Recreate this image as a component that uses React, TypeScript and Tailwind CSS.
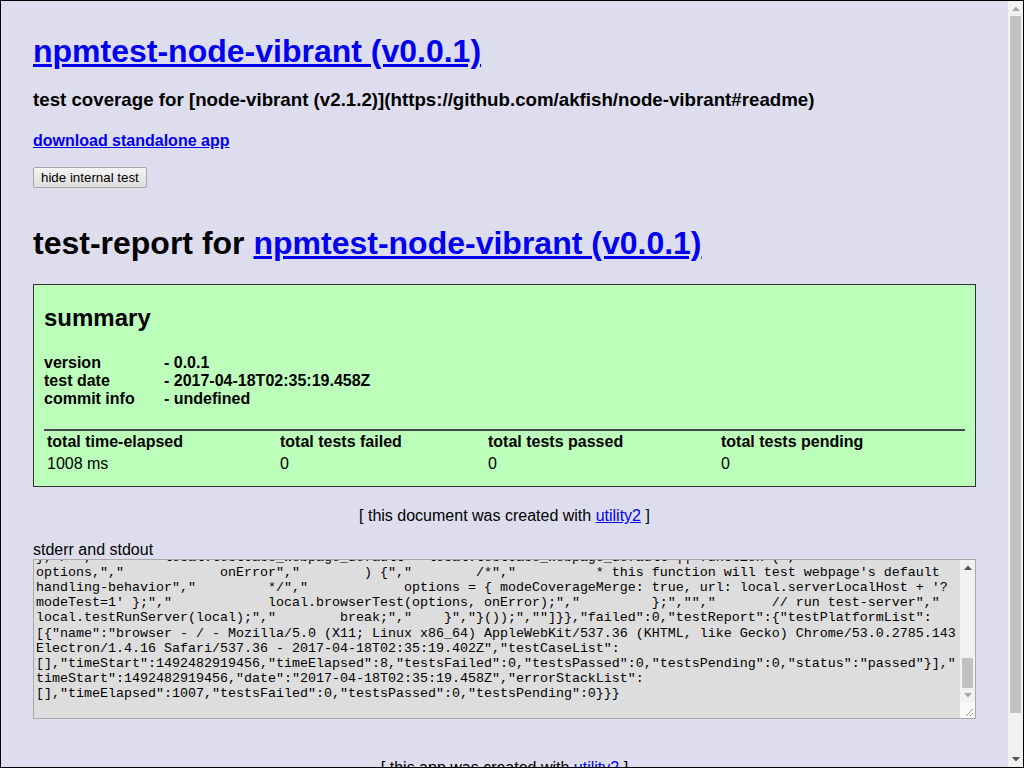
import React, { useLayoutEffect, useRef } from "react";

const sp = (n: number) => " ".repeat(n);

const hidden = [
  '[{"name":"node - linux - v7.8.0 - 2017-04-18T02:35:17.994Z","testCaseList":[{"errorStack":"","failed":false,',
  '"name":"testCase_buildApidoc_default","timeElapsed":12,"timeStart":1492482917995},{"errorStack":"","failed":',
  'false,"name":"testCase_buildApp_default","timeElapsed":143,"timeStart":1492482918007},{"errorStack":"",',
  '"failed":false,"name":"testCase_buildReadme_default","timeElapsed":4,"timeStart":1492482918150},',
  '{"errorStack":"","failed":false,"name":"testCase_webpage_default","timeElapsed":1203,"timeStart":',
  '1492482918154,"testRunnerSource":["/* istanbul instrument in package npmtest_node_vibrant */","/*jslint",',
  '"    bitwise: true,","    browser: true,","    maxerr: 8,","    maxlen: 96,","    node: true,","    nomen:',
  ' true,","    regexp: true,","    stupid: true","*/","(function () {","    \'use strict\';","    var local;","","",',
  '"    // run shared js-env code - pre-init","    (function () {","        // init local","        local = {};',
  '","        // init modeJs","        local.modeJs = (function () {","            try {","                return',
  ' typeof navigator.userAgent === \'string\' &&","                    typeof document.querySelector(\'body\')',
  ' === \'object\' &&","                    typeof XMLHttpRequest.prototype.open === \'function\' &&","',
  '                    \'browser\';","            } catch (errorCaughtBrowser) {","                return module',
  '.exports &&","                    typeof process.versions.node === \'string\' &&","                    typeof',
  ' require(\'http\').createServer === \'function\' &&","                    \'node\';","            }","        }());',
  '","        // init global","        local.global = local.modeJs === \'browser\'","            ? window","',
  '            : global;","        // init utility2_rollup","        local = local.global.utility2_rollup ||',
  ' local;","        // init lib","        local.local = local.npmtest_node_vibrant = local;","        // init',
  ' exports","        if (local.modeJs === \'browser\') {","            local.global.utility2_npmtest_node_vibrant',
  ' = local;","        } else {","            module.exports = local;","            module.exports.__dirname =',
  ' __dirname;","            module.exports.module = module;","        }","    }());","","","","    // run shared',
  ' js-env code - function","    (function () {","        return;","    }());","","","","    // run browser',
  ' js-env code - function","    case \'browser\':","","    // run node js-env code - function","    case',
  ' \'node\':","        local.testCase_buildApidoc_default = function (options, onError) {","            /*","',
  '             * this function will test buildApidoc\'s default handling-behavior-behavior","             */',
  '","            options = { modulePathList: module.paths };","            local.buildApidoc(options, onError);',
  '","        };","","        local.testCase_buildApp_default = function (options, onError) {","            /*',
  '","             * this function will test buildApp\'s default handling-behavior-behavior","             */",',
  '"            local.testCase_buildReadme_default(options, local.onErrorThrow);","            local.buildApp',
  '(options, onError);","        };","","        local.testCase_buildReadme_default = function (options, onError)',
  ' {","            local.buildReadme(options, onError);","        };","","    ',
];

const visible = [
  '}, /*","' + sp(8) + 'local.testCase_webpage_default = local.testCase_webpage_default || function (",',
  'options,","' + sp(12) + 'onError","' + sp(8) + ') {","' + sp(8) + '/*","' + sp(10) + "* this function will test webpage's default",
  'handling-behavior","' + sp(9) + '*/","' + sp(12) + "options = { modeCoverageMerge: true, url: local.serverLocalHost + '?",
  "modeTest=1' };\",\"" + sp(12) + 'local.browserTest(options, onError);","' + sp(9) + '};","","' + sp(7) + '// run test-server","',
  'local.testRunServer(local);","' + sp(8) + 'break;","' + sp(4) + '}","}());",""]}},"failed":0,"testReport":{"testPlatformList":',
  '[{"name":"browser - / - Mozilla/5.0 (X11; Linux x86_64) AppleWebKit/537.36 (KHTML, like Gecko) Chrome/53.0.2785.143',
  'Electron/1.4.16 Safari/537.36 - 2017-04-18T02:35:19.402Z","testCaseList":',
  '[],"timeStart":1492482919456,"timeElapsed":8,"testsFailed":0,"testsPassed":0,"testsPending":0,"status":"passed"}],"',
  'timeStart":1492482919456,"date":"2017-04-18T02:35:19.458Z","errorStackList":',
  '[],"timeElapsed":1007,"testsFailed":0,"testsPassed":0,"testsPending":0}}}',
  "",
];

const logText = [...hidden, ...visible].join("\n");

function ArrowUp({ color }: { color: string }) {
  return (
    <svg width="8" height="5" viewBox="0 0 8 5">
      <polygon points="0,5 8,5 4,0.5" fill={color} />
    </svg>
  );
}

function ArrowDown({ color }: { color: string }) {
  return (
    <svg width="8" height="5" viewBox="0 0 8 5">
      <polygon points="0,0 8,0 4,4.5" fill={color} />
    </svg>
  );
}

export default function App() {
  const taRef = useRef<HTMLTextAreaElement>(null);
  useLayoutEffect(() => {
    const ta = taRef.current;
    if (ta) ta.scrollTop = ta.scrollHeight;
  }, []);

  return (
    <div className="w-[1024px] h-[768px] border border-black flex bg-[#dde] font-['Liberation_Sans',Arial,sans-serif] leading-[normal] text-black">
      <div className="flex-1 min-w-0 h-full overflow-hidden">
        <div className="px-8 pt-8 pb-8">
          <h1 className="text-[32px] font-bold leading-[37px]">
            <a href="#" className="text-[#0000ee] underline">
              npmtest-node-vibrant (v0.0.1)
            </a>
          </h1>
          <h3 className="mt-[19px] text-[18.72px] font-bold leading-[21.5px]">
            test coverage for [node-vibrant (v2.1.2)](https://github.com/akfish/node-vibrant#readme)
          </h3>
          <h4 className="mt-[21px] text-[16px] font-bold leading-[18.4px]">
            <a href="#" className="text-[#0000ee] underline">
              download standalone app
            </a>
          </h4>
          <div className="mt-[17px] flex">
            <button className="h-[21px] px-[7px] border border-[#a6a6a6] rounded-[2px] bg-gradient-to-b from-[#f4f4f4] to-[#dedede] text-[13.333px] leading-[15px] font-['Liberation_Sans',Arial,sans-serif] text-black">
              hide internal test
            </button>
          </div>
          <h1 className="mt-[37px] text-[32px] font-bold leading-[37px]">
            test-report for{" "}
            <a href="#" className="text-[#0000ee] underline">
              npmtest-node-vibrant (v0.0.1)
            </a>
          </h1>
          <div className="mt-[22px] border border-[#333] bg-[#bfb] px-[10px] pt-[19px] pb-[13px]">
            <h2 className="text-[24px] font-bold leading-[27.6px]">summary</h2>
            <div className="mt-[22px] font-bold text-[16px] leading-[18px]">
              <div className="flex">
                <div className="w-[120px]">version</div>
                <div>- 0.0.1</div>
              </div>
              <div className="flex">
                <div className="w-[120px]">test date</div>
                <div>- 2017-04-18T02:35:19.458Z</div>
              </div>
              <div className="flex">
                <div className="w-[120px]">commit info</div>
                <div>- undefined</div>
              </div>
            </div>
            <div className="mt-[21px] border-t-2 border-[#444] pt-[2px] pl-[3px] grid grid-cols-[233px_208px_233px_1fr] gap-y-[4px] text-[16px] leading-[18.4px]">
              <div className="font-bold">total time-elapsed</div>
              <div className="font-bold">total tests failed</div>
              <div className="font-bold">total tests passed</div>
              <div className="font-bold">total tests pending</div>
              <div>1008 ms</div>
              <div>0</div>
              <div>0</div>
              <div>0</div>
            </div>
          </div>
          <div className="mt-[20px] text-center text-[16px] leading-[18.4px]">
            [ this document was created with{" "}
            <a href="#" className="text-[#0000ee] underline">
              utility2
            </a>{" "}
            ]
          </div>
          <div className="mt-[15px] text-[16px] leading-[18.4px]">stderr and stdout</div>
          <div className="h-[160px] flex border border-[#a9a9a9] bg-[#ddd]">
            <textarea
              ref={taRef}
              readOnly
              value={logText}
              className="flex-1 min-w-0 h-full resize-none overflow-hidden bg-transparent border-0 outline-none p-[2px] font-['Liberation_Mono','Courier_New',monospace] text-[13.333px] leading-[15.1px] text-black"
            />
            <div className="w-[15px] flex flex-col bg-[#f1f1f1]">
              <div className="h-[15px] flex items-center justify-center">
                <ArrowUp color="#505050" />
              </div>
              <div className="flex-1 flex flex-col justify-end px-[2px]">
                <div className="h-[30px] bg-[#c1c1c1]" />
              </div>
              <div className="h-[15px] flex items-center justify-center">
                <ArrowDown color="#a3a3a3" />
              </div>
              <div className="h-[15px] bg-[#fafafa] flex items-end justify-end">
                <svg width="15" height="15" viewBox="0 0 15 15">
                  <line x1="13" y1="6" x2="6" y2="13" stroke="#999" strokeWidth="1" />
                  <line x1="13" y1="10" x2="10" y2="13" stroke="#999" strokeWidth="1" />
                </svg>
              </div>
            </div>
          </div>
          <div className="mt-[40px] text-center text-[16px] leading-[18.4px]">
            [ this app was created with{" "}
            <a href="#" className="text-[#0000ee] underline">
              utility2
            </a>{" "}
            ]
          </div>
        </div>
      </div>
      <div className="w-[15px] h-full flex flex-col bg-[#f1f1f1]">
        <div className="h-[15px] flex items-center justify-center">
          <ArrowUp color="#a3a3a3" />
        </div>
        <div className="flex-1 flex flex-col px-[2px]">
          <div className="h-[697px] bg-[#c1c1c1]" />
        </div>
        <div className="h-[15px] flex items-center justify-center">
          <ArrowDown color="#505050" />
        </div>
      </div>
    </div>
  );
}
